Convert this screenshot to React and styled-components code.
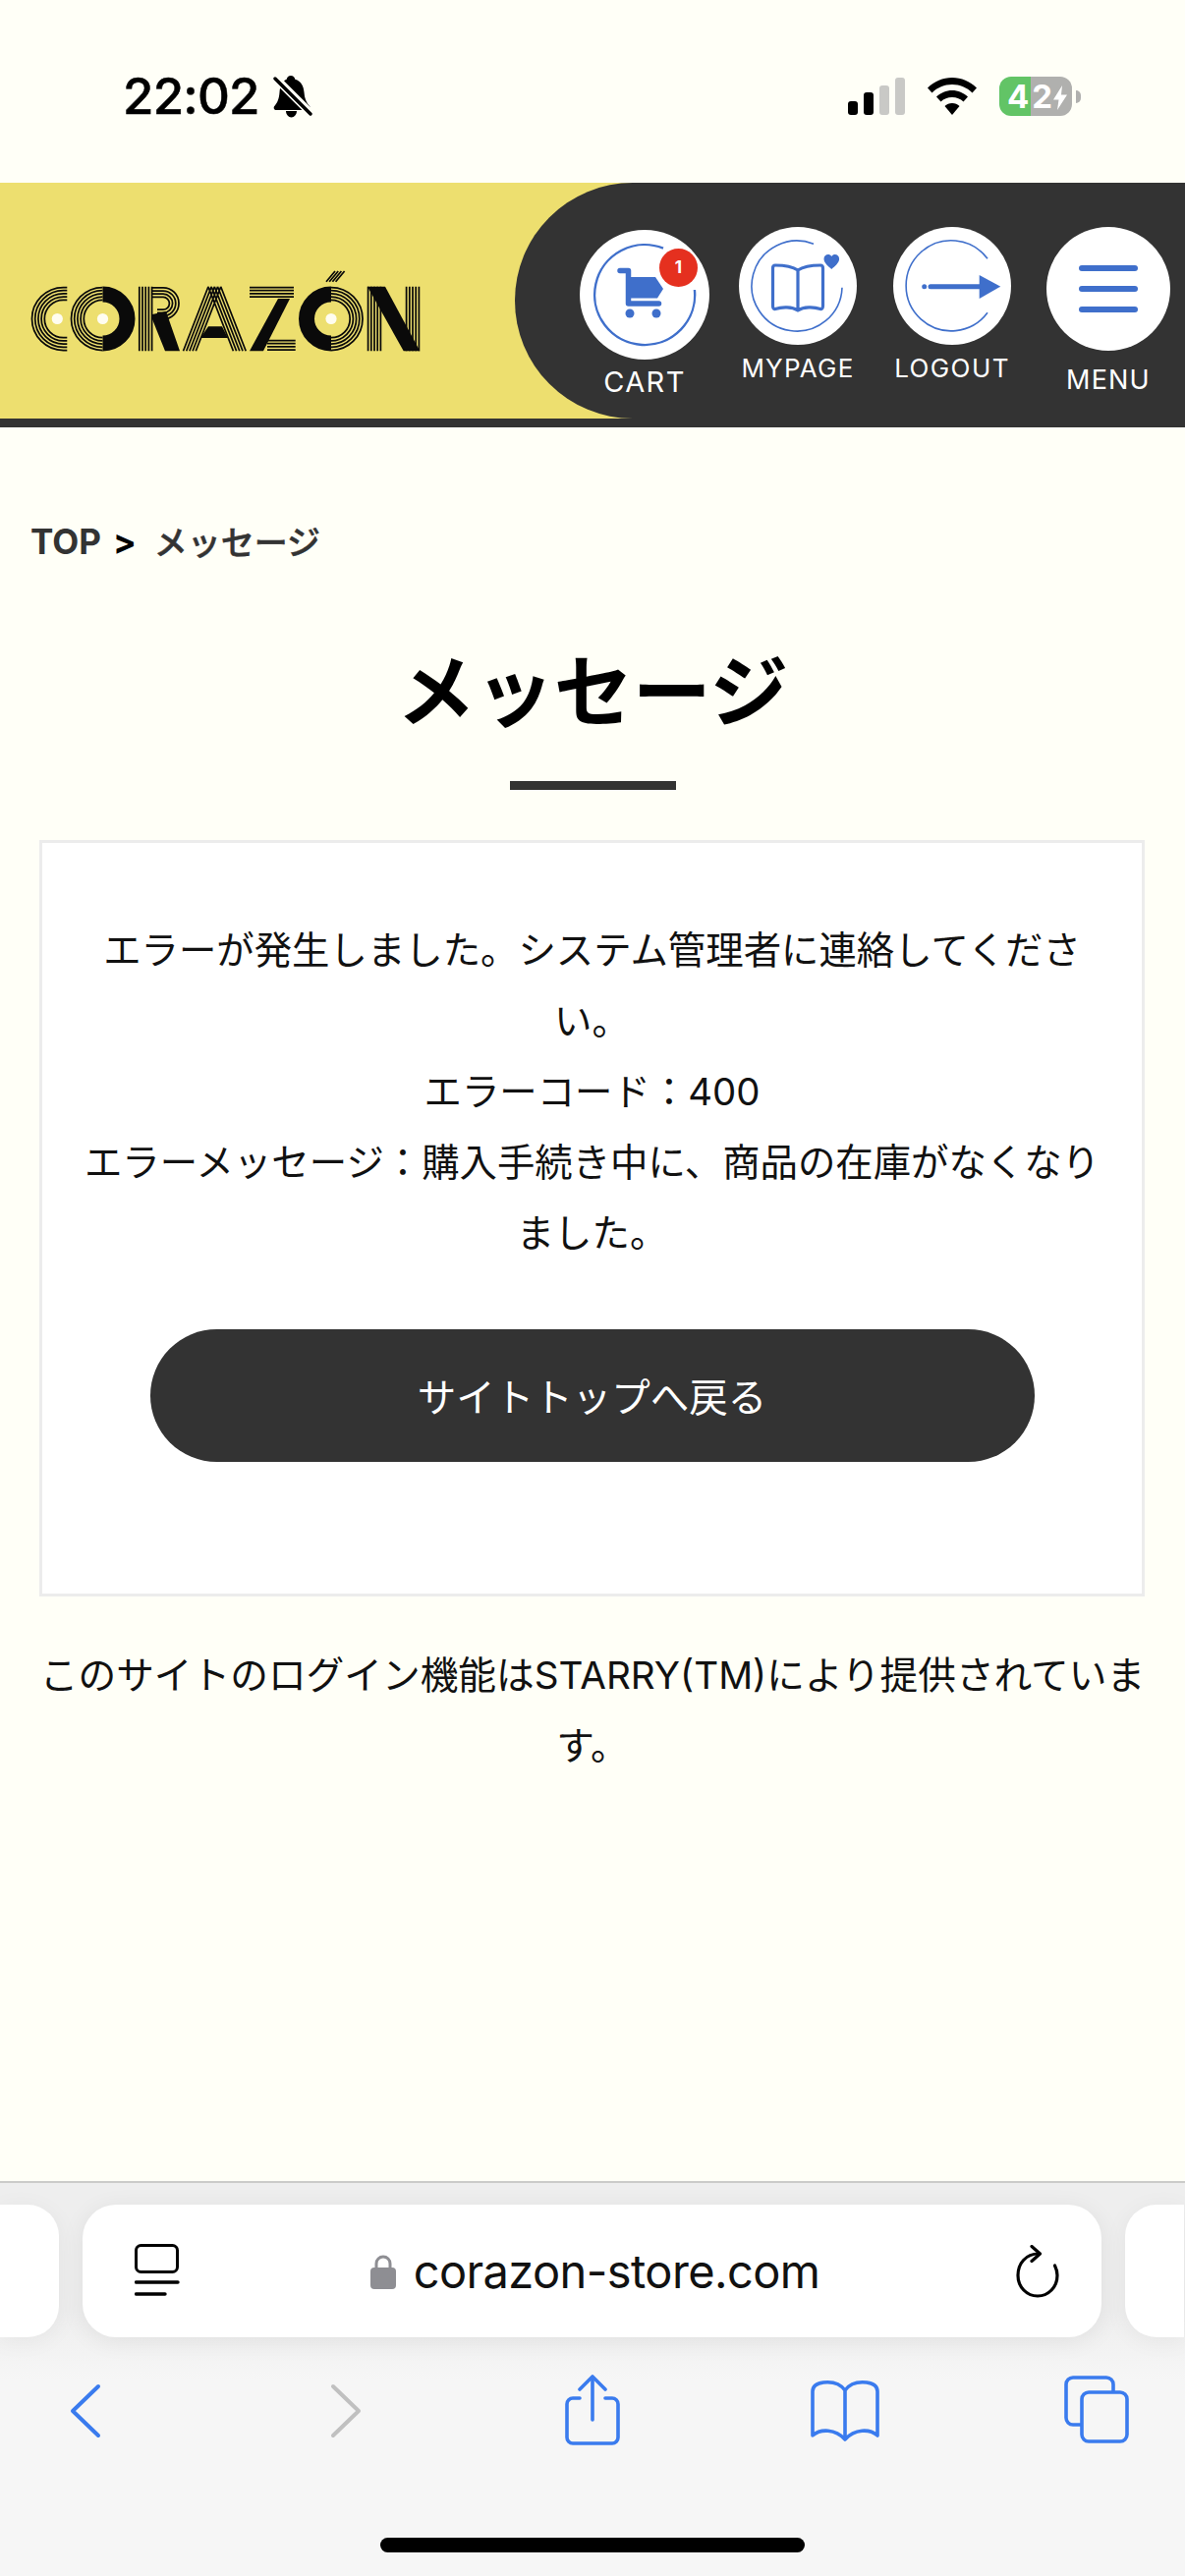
import React from "react";
import styled, { createGlobalStyle } from "styled-components";

const BLUE = "#3F6FCB";
const SAFARI = "#3A7BEE";
const PAGE_BG = "#FFFFF7";

const Global = createGlobalStyle`
  html, body { margin: 0; padding: 0; background: ${PAGE_BG}; }
  * { box-sizing: border-box; }
`;

const Page = styled.div`
  width: 1206px;
  height: 2622px;
  display: flex;
  flex-direction: column;
  overflow: hidden;
  background: ${PAGE_BG};
  font-family: Inter, "Noto Sans CJK JP", sans-serif;
  color: #111;
`;

const StatusBar = styled.div`
  height: 186px;
  flex: none;
  display: flex;
  justify-content: space-between;
  align-items: flex-start;
  padding: 73px 106px 0 125px;
`;
const StatusGroup = styled.div`
  display: flex;
  align-items: center;
  gap: ${(p) => p.$gap}px;
  height: 50px;
`;
const Time = styled.span`
  font: 500 51px/50px Inter, sans-serif;
  letter-spacing: -0.8px;
  -webkit-text-stroke: 0.5px #000;
  color: #000;
`;
const Battery = styled.div`
  position: relative;
  width: 74px;
  height: 40px;
  border-radius: 12px;
  overflow: hidden;
  background: linear-gradient(90deg, #62C466 0 32px, #B0B0AE 32px);
  color: #fff;
  font: 700 33px/40px Inter, sans-serif;
  display: flex;
  padding-left: 8px;
  letter-spacing: 3px;
`;
const BatteryWrap = styled.div`
  display: flex;
  align-items: center;
  gap: 4px;
`;
const BatteryBolt = styled.svg`
  position: absolute;
  left: 55px;
  top: 9px;
`;
const BatteryNub = styled.div`
  width: 5px;
  height: 13px;
  border-radius: 0 5px 5px 0;
  background: #B0B0AE;
`;

const Header = styled.header`
  flex: none;
  height: 249px;
  display: flex;
  justify-content: space-between;
  background: #EDDF6F;
  border-bottom: 9px solid #333;
`;
const LogoBox = styled.div`
  padding-top: 84px;
`;
const Nav = styled.nav`
  width: 682px;
  height: 240px;
  background: #333;
  border-radius: 120px 0 0 120px;
  display: flex;
  align-items: flex-start;
  padding-left: 66px;
`;
const NavItem = styled.a`
  position: relative;
  flex: none;
  width: ${(p) => p.$size}px;
  margin-left: ${(p) => p.$left}px;
  margin-top: ${(p) => p.$top}px;
  display: flex;
  flex-direction: column;
  align-items: center;
`;
const NavCircle = styled.div`
  width: ${(p) => p.$size}px;
  height: ${(p) => p.$size}px;
  border-radius: 50%;
  background: #fff;
  display: flex;
`;
const NavLabel = styled.span`
  margin-top: ${(p) => p.$gap}px;
  font: 400 ${(p) => p.$font}px/1 Inter, sans-serif;
  letter-spacing: ${(p) => p.$track}px;
  color: #fff;
  white-space: nowrap;
`;
const Badge = styled.span`
  position: absolute;
  left: 81px;
  top: 19px;
  width: 39px;
  height: 39px;
  border-radius: 50%;
  background: #E5301F;
  color: #fff;
  font: 700 17px/39px Inter, sans-serif;
  text-align: center;
`;

const Main = styled.main`
  flex: 1;
  min-height: 0;
`;
const Breadcrumb = styled.div`
  margin-top: 91px;
  padding-left: 31px;
  height: 50px;
  display: flex;
  align-items: center;
  color: #333;
`;
const CrumbLink = styled.span`
  font: 700 35px/1 Inter, sans-serif;
`;
const CrumbSeparator = styled.span`
  margin: 0 18px 0 12px;
  font: 700 35px/1 Inter, sans-serif;
  color: #000;
`;
const CrumbCurrent = styled.span`
  font: 500 34px/1 "Noto Sans CJK JP", sans-serif;
  -webkit-text-stroke: 0.5px #333;
`;
const Title = styled.h1`
  margin: 83px 0 0;
  font: 700 80px/90px Inter, "Noto Sans CJK JP", sans-serif;
  color: #000;
  text-align: center;
`;
const Divider = styled.div`
  width: 169px;
  height: 9px;
  margin: 46px auto 0;
  background: #333;
`;
const Card = styled.section`
  margin: 51px 41px 0 40px;
  padding: 73px 42px 134px;
  background: #fff;
  border: 3px solid #ECECEC;
`;
const Message = styled.p`
  margin: 0;
  font-size: 38.400px;
  line-height: 72px;
  text-align: center;
  color: #111;
`;
const HomeButton = styled.a`
  display: flex;
  align-items: center;
  justify-content: center;
  width: 900px;
  height: 135px;
  margin: 62px auto 0;
  border-radius: 68px;
  background: #333;
  color: #fff;
  font-size: 39.500px;
  padding-bottom: 3px;
`;
const Footnote = styled.p`
  margin: 44px 30px 0 30px;
  font-size: 38.700px;
  line-height: 72px;
  text-align: center;
  color: #111;
`;

const BrowserBar = styled.div`
  flex: none;
  height: 402px;
  border-top: 2px solid #CBCBC9;
  background: linear-gradient(180deg, #EEEEEE 0, #EEEEEE 130px, #F6F6F6 200px);
  display: flex;
  flex-direction: column;
`;
const Tabs = styled.div`
  display: flex;
  margin-top: 22px;
  height: 135px;
`;
const SidePill = styled.div`
  flex: none;
  width: 60px;
  background: #fff;
  border-radius: ${(p) => (p.$right ? "32px 0 0 32px" : "0 32px 32px 0")};
  margin-left: ${(p) => p.$left}px;
  box-shadow: 0 4px 24px rgba(0, 0, 0, 0.05);
`;
const AddressPill = styled.div`
  flex: none;
  width: 1037px;
  margin-left: 24px;
  padding: 0 43px 0 53px;
  background: #fff;
  border-radius: 34px;
  box-shadow: 0 4px 24px rgba(0, 0, 0, 0.07);
  display: flex;
  align-items: center;
  justify-content: space-between;
`;
const Domain = styled.div`
  display: flex;
  align-items: center;
  gap: 18px;
  margin-right: 6px;
  font: 400 47px/1 Inter, sans-serif;
  letter-spacing: -0.6px;
  color: #111;
`;
const ToolRow = styled.div`
  display: flex;
  margin-top: 38px;
  height: 72px;
`;
const Tool = styled.button`
  border: 0;
  padding: 0;
  background: none;
  display: flex;
  margin-left: ${(p) => p.$left}px;
`;
const HomeIndicator = styled.div`
  width: 432px;
  height: 15px;
  margin: 94px auto 0;
  border-radius: 8px;
  background: #000;
`;

const P = 3.2;
const SW = 1.75;
const T = 21.7;
const B = 87.3;
const range = (n) => Array.from({ length: n }, (_, i) => i);

const leftArcs = (cx, cy, R, n) => range(n).map((i) => {
  const r = R - i * P;
  return `M${cx} ${cy - r}A${r} ${r} 0 0 0 ${cx} ${cy + r}`;
}).join("");
const rightArcs = (cx, cy, R, n) => range(n).map((i) => {
  const r = R - i * P;
  return `M${cx} ${cy - r}A${r} ${r} 0 0 1 ${cx} ${cy + r}`;
}).join("");
const vLines = (x, n) => range(n).map((i) => `M${x + i * P} ${T}V${B}`).join("");

function Logo() {
  const cy = 54.5;
  const stripes = [
    leftArcs(64.5, cy, 32, 5),
    range(5).map((i) => {
      const r = 32 - i * P;
      return `M64.5 ${cy - r}H68.3M64.5 ${cy + r}H68.3`;
    }).join(""),
    leftArcs(104.5, cy, 32, 5),
    rightArcs(337, cy, 32, 5),
    vLines(141.8, 5),
    range(4).map((i) => {
      const r = 16 - i * P;
      return `M155 ${38.8 - r}H166A${r} ${r} 0 0 1 166 ${38.8 + r}H160`;
    }).join(""),
    range(5).map((i) => `M${186.5 + i * P} ${B}L${212 + i * P} ${T}M${250.2 - i * P} ${B}L${224.7 - i * P} ${T}`).join(""),
    range(4).map((i) => `M254 ${22.5 + i * P}H299`).join(""),
    range(4).map((i) => `M272 ${76.5 + i * P}H300.7`).join(""),
    range(4).map((i) => `M${332 + i * P} 16.7L${341 + i * P} 6`).join(""),
    vLines(374.6, 5),
    vLines(413.6, 5),
  ].join("");
  return (
    <svg width="440" height="110" viewBox="0 0 440 110" role="img" aria-label="CORAZÓN">
      <path d={stripes} fill="none" stroke="#0A0A0A" strokeWidth={SW} />
      <path d={`M104.5 ${cy - 25}A25 25 0 0 1 104.5 ${cy + 25}`} fill="none" stroke="#0A0A0A" strokeWidth="16" />
      <path d={`M337 ${cy - 25}A25 25 0 0 0 337 ${cy + 25}`} fill="none" stroke="#0A0A0A" strokeWidth="16" />
      <g fill="#0A0A0A">
        <polygon points="155,50 169,47 183,87.3 168,87.3 155,55" />
        <polygon points="212,62.3 226,62.3 232,74 204,74" />
        <polygon points="283,34 295,34 268,87.3 254,87.3" />
        <polygon points="374,21.7 392,21.7 427.3,87.3 410.7,87.3" />
      </g>
      <g fill="#FFFDF0">
        <circle cx="58.3" cy="54.5" r="5.6" />
        <circle cx="104.5" cy="54.5" r="5.6" />
        <circle cx="337" cy="54.5" r="5.6" />
      </g>
    </svg>
  );
}

const BellSlash = () => (
  <svg width="40" height="43" viewBox="0 0 40 43">
    <path d="M18 0c2.200 0 4 1.700 4.300 3.800C28.500 5.500 31 11 31.500 17c.4 6 2 10 5.500 14 1.300 1.500.5 4-1.800 4H3C.8 35 0 32.500 1.300 31 4.800 27 6 23 6.500 17 7 11 9 5.500 13.700 3.800 14 1.700 15.800 0 18 0z" fill="#000" />
    <path d="M13 36h11c0 3.500-2.500 6.500-5.500 6.500S13 39.500 13 36z" fill="#000" />
    <path d="M0 0 40 40" stroke={PAGE_BG} strokeWidth="8" />
    <path d="M2 3 38 39" stroke="#000" strokeWidth="3.400" strokeLinecap="round" />
  </svg>
);
const Signal = () => (
  <svg width="58" height="38" viewBox="0 0 58 38">
    <rect x="0" y="24" width="10" height="14" rx="3" fill="#000" />
    <rect x="16" y="15" width="10" height="23" rx="3" fill="#000" />
    <rect x="32" y="8" width="10" height="30" rx="3" fill="#C9C9C6" />
    <rect x="48" y="0" width="10" height="38" rx="3" fill="#C9C9C6" />
  </svg>
);
const Wifi = () => (
  <svg width="50" height="38" viewBox="0 0 50 38">
    <path d="M25 0C15.500 0 7 3.800 0 10.500l4.500 5C10 10 17 7 25 7s15 3 20.500 8.500l4.500-5C43 3.800 34.500 0 25 0z" fill="#000" />
    <path d="M25 13c-6 0-11.500 2.500-16 6.500l4.500 5C16.500 21.500 20.500 20 25 20s8.500 1.500 11.500 4.500l4.500-5C36.500 15.500 31 13 25 13z" fill="#000" />
    <path d="M25 26c-3 0-5.500 1-7.500 3L25 38l7.500-9c-2-2-4.500-3-7.500-3z" fill="#000" />
  </svg>
);

const CartIcon = () => (
  <svg width="132" height="132" viewBox="0 0 132 132">
    <path d="M85 18.700A51 51 0 1 0 116.900 61" fill="none" stroke={BLUE} strokeWidth="2.400" />
    <path d="M41 41.500H49.500V75H80.500" fill="none" stroke={BLUE} strokeWidth="5.500" strokeLinecap="round" strokeLinejoin="round" />
    <polygon points="50,48 77,48 85,60 79,69.500 50,69.500" fill={BLUE} />
    <circle cx="51" cy="85" r="4.500" fill={BLUE} />
    <circle cx="78" cy="85" r="4.500" fill={BLUE} />
  </svg>
);
const BookHeartIcon = () => (
  <svg width="120" height="120" viewBox="0 0 120 120">
    <path d="M76 17.300A46 46 0 1 0 105 61.700" fill="none" stroke={BLUE} strokeWidth="1.600" />
    <path d="M60 44C54 40 44 39 37 39Q34.500 39 34.500 42V80Q34.500 84 37 83.500C44 81 54 81 60 85C66 81 76 81 83 83.500Q85.500 84 85.500 80V42Q85.500 39 83 39C76 39 66 40 60 44V85" fill="none" stroke={BLUE} strokeWidth="3.200" strokeLinejoin="round" />
    <path d="M94.300 43C91 40 86.500 36.500 86.500 32.500C86.500 28 92 26.500 94.300 30C96.600 26.500 102.100 28 102.100 32.500C102.100 36.500 97.600 40 94.300 43Z" fill={BLUE} />
  </svg>
);
const LogoutIcon = () => (
  <svg width="120" height="120" viewBox="0 0 120 120">
    <path d="M96 32.300A46 46 0 1 0 96 87.300" fill="none" stroke={BLUE} strokeWidth="1.600" />
    <circle cx="31.700" cy="60.700" r="2.500" fill={BLUE} />
    <path d="M38 60.700H90" stroke={BLUE} strokeWidth="5" strokeLinecap="round" />
    <polygon points="87.700,49 109.300,60.700 87.700,73" fill={BLUE} />
  </svg>
);
const MenuIcon = () => (
  <svg width="126" height="126" viewBox="0 0 126 126">
    <g stroke={BLUE} strokeWidth="6" strokeLinecap="round">
      <path d="M36 42H90" />
      <path d="M36 63H90" />
      <path d="M36 84H90" />
    </g>
  </svg>
);

const TabOverview = () => (
  <svg width="46" height="55" viewBox="0 0 46 55" fill="none" stroke="#000" strokeLinecap="round">
    <rect x="1.500" y="1.500" width="42" height="27" rx="5" strokeWidth="3" />
    <path d="M1.500 39H44" strokeWidth="3.400" />
    <path d="M1.500 51H31" strokeWidth="3.400" />
  </svg>
);
const Lock = () => (
  <svg width="26" height="36" viewBox="0 0 26 36">
    <path d="M6 15V10a7 7 0 0 1 14 0v5" fill="none" stroke="#8E8E93" strokeWidth="3" />
    <rect x="0" y="14" width="26" height="22" rx="4" fill="#8E8E93" />
  </svg>
);
const Reload = () => (
  <svg width="44" height="54" viewBox="0 0 44 54" fill="none" stroke="#000" strokeWidth="3.200" strokeLinecap="round" strokeLinejoin="round">
    <path d="M23 9C10 9 2 19 2 31c0 12 9 21 20 21s20-9 20-21c0-4-1-7-2.500-10" />
    <path d="M16 1.500 24.500 9 16 16.500" />
  </svg>
);
const Back = ({ color }) => (
  <svg width="32" height="72" viewBox="0 0 32 72" fill="none" stroke={color} strokeWidth="4" strokeLinecap="round" strokeLinejoin="round">
    <path d="M29 12 3 37 29 62" />
  </svg>
);
const Forward = ({ color }) => (
  <svg width="32" height="72" viewBox="0 0 32 72" fill="none" stroke={color} strokeWidth="4" strokeLinecap="round" strokeLinejoin="round">
    <path d="M3 12 29 37 3 62" />
  </svg>
);
const Share = () => (
  <svg width="56" height="72" viewBox="0 0 56 72" fill="none" stroke={SAFARI} strokeWidth="3.600" strokeLinecap="round" strokeLinejoin="round">
    <path d="M15 24H8a6 6 0 0 0-6 6v34a6 6 0 0 0 6 6h40a6 6 0 0 0 6-6V30a6 6 0 0 0-6-6h-7" />
    <path d="M28 46V3" />
    <path d="M15 15 28 2 41 15" />
  </svg>
);
const Bookmarks = () => (
  <svg width="70" height="72" viewBox="0 0 70 72" fill="none" stroke={SAFARI} strokeWidth="3.600" strokeLinecap="round" strokeLinejoin="round">
    <path d="M35 16C30 9 22 7 13 8C6 9 2 12 2 17V62C10 55 25 55 35 66C45 55 60 55 68 62V17C68 12 64 9 57 8C48 7 40 9 35 16V66" />
  </svg>
);
const TabsIcon = () => (
  <svg width="66" height="72" viewBox="0 0 66 72" fill="none" stroke={SAFARI} strokeWidth="3.600" strokeLinejoin="round">
    <path d="M50 18V10a7 7 0 0 0-7-7H9a7 7 0 0 0-7 7v34a7 7 0 0 0 7 7h8" />
    <rect x="18" y="18" width="46" height="50" rx="7" />
  </svg>
);

export default function App() {
  return (
    <Page>
      <Global />
      <StatusBar>
        <StatusGroup $gap={14}>
          <Time>22:02</Time>
          <BellSlash />
        </StatusGroup>
        <StatusGroup $gap={23}>
          <Signal />
          <Wifi />
          <BatteryWrap>
            <Battery>
              42
              <BatteryBolt width="14" height="25" viewBox="0 0 14 25">
                <path d="M9 0 0 14.500h5.500L4 25 14 9.500H8z" fill="#fff" />
              </BatteryBolt>
            </Battery>
            <BatteryNub />
          </BatteryWrap>
        </StatusGroup>
      </StatusBar>

      <Header>
        <LogoBox>
          <Logo />
        </LogoBox>
        <Nav>
          <NavItem $size={132} $left={0} $top={48}>
            <NavCircle $size={132}><CartIcon /></NavCircle>
            <Badge>1</Badge>
            <NavLabel $gap={8} $font={29} $track={1.4}>CART</NavLabel>
          </NavItem>
          <NavItem $size={120} $left={30} $top={45}>
            <NavCircle $size={120}><BookHeartIcon /></NavCircle>
            <NavLabel $gap={11} $font={26} $track={1.2}>MYPAGE</NavLabel>
          </NavItem>
          <NavItem $size={120} $left={37} $top={45}>
            <NavCircle $size={120}><LogoutIcon /></NavCircle>
            <NavLabel $gap={11} $font={26} $track={1.4}>LOGOUT</NavLabel>
          </NavItem>
          <NavItem $size={126} $left={36} $top={45}>
            <NavCircle $size={126}><MenuIcon /></NavCircle>
            <NavLabel $gap={16} $font={27} $track={1.2}>MENU</NavLabel>
          </NavItem>
        </Nav>
      </Header>

      <Main>
        <Breadcrumb>
          <CrumbLink>TOP</CrumbLink>
          <CrumbSeparator>&gt;</CrumbSeparator>
          <CrumbCurrent>メッセージ</CrumbCurrent>
        </Breadcrumb>
        <Title>メッセージ</Title>
        <Divider />
        <Card>
          <Message>
            エラーが発生しました。システム管理者に連絡してください。
            <br />
            エラーコード：400
            <br />
            エラーメッセージ：購入手続き中に、商品の在庫がなくなりました。
          </Message>
          <HomeButton>サイトトップへ戻る</HomeButton>
        </Card>
        <Footnote>このサイトのログイン機能はSTARRY(TM)により提供されています。</Footnote>
      </Main>

      <BrowserBar>
        <Tabs>
          <SidePill $left={0} />
          <AddressPill>
            <TabOverview />
            <Domain>
              <Lock />
              corazon-store.com
            </Domain>
            <Reload />
          </AddressPill>
          <SidePill $left={24} $right />
        </Tabs>
        <ToolRow>
          <Tool $left={71}><Back color={SAFARI} /></Tool>
          <Tool $left={233}><Forward color="#C0C0C0" /></Tool>
          <Tool $left={207}><Share /></Tool>
          <Tool $left={194}><Bookmarks /></Tool>
          <Tool $left={188}><TabsIcon /></Tool>
        </ToolRow>
        <HomeIndicator />
      </BrowserBar>
    </Page>
  );
}
